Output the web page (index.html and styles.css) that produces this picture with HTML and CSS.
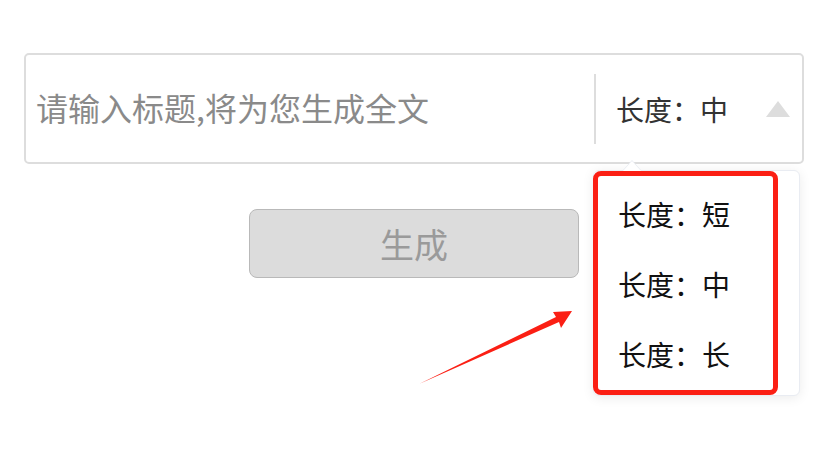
FILE: index.html
```html
<!DOCTYPE html>
<html>
<head>
  <title>生成全文</title>
  <link rel="stylesheet" href="styles.css">
</head>
<body>
  <div class="page">
    <div class="input-box">
      <div class="title-input">请输入标题,将为您生成全文</div>
      <div class="divider"></div>
      <div class="length-select">
        <span class="length-value">长度：中</span>
        <span class="select-arrow"></span>
      </div>
    </div>

    <button class="generate-btn">生成</button>

    <div class="dropdown">
      <div class="dropdown-item">长度：短</div>
      <div class="dropdown-item">长度：中</div>
      <div class="dropdown-item">长度：长</div>
    </div>

    <!-- annotation marks -->
    <div class="mark-box"></div>
    <svg class="mark-arrow" width="828" height="451" viewBox="0 0 828 451">
      <polygon points="419,384 556,317 553,312 572,311 561,328 559,322" fill="#fb1f14"/>
    </svg>
  </div>
</body>
</html>
```

FILE: styles.css
```css
:root {
  --border: #dddddd;
  --placeholder: #8a8a8a;
  --text: #333333;
  --mark-red: #fb1f14;
}

body {
  margin: 0;
  background: #fff;
  font-family: "Noto Sans CJK SC", "Microsoft YaHei", sans-serif;
}

.page {
  position: relative;
  width: 828px;
  height: 451px;
  padding: 53px 24px 0;
  box-sizing: border-box;
}

.input-box {
  display: flex;
  align-items: center;
  height: 111px;
  border: 2px solid var(--border);
  border-radius: 5px;
  box-sizing: border-box;
}

.title-input {
  flex: 1;
  padding: 0 0 3px 10px;
  font-size: 32px;
  color: var(--placeholder);
  white-space: nowrap;
}

.divider {
  width: 2px;
  height: 70px;
  background: var(--border);
}

.length-select {
  display: flex;
  align-items: center;
  justify-content: space-between;
  width: 206px;
  padding: 0 12px 0 20px;
  box-sizing: border-box;
  font-size: 28px;
  color: var(--text);
}

.select-arrow {
  width: 0;
  height: 0;
  border-left: 12px solid transparent;
  border-right: 12px solid transparent;
  border-bottom: 16px solid var(--border);
}

.generate-btn {
  display: block;
  width: 330px;
  height: 69px;
  margin: 45px auto 0;
  background: #dcdcdc;
  border: 1px solid #b9b9b9;
  border-radius: 8px;
  font-family: inherit;
  font-size: 34px;
  color: #9a9a9a;
}

.dropdown {
  position: absolute;
  left: 593px;
  top: 170px;
  width: 207px;
  height: 226px;
  padding: 8px 0;
  box-sizing: border-box;
  background: #fff;
  border: 1px solid #e9ecf2;
  border-radius: 6px;
  box-shadow: 0 2px 12px rgba(0, 0, 0, 0.08);
}

.dropdown::before,
.dropdown::after {
  content: "";
  position: absolute;
  left: 29px;
  width: 0;
  height: 0;
  border-left: 9px solid transparent;
  border-right: 9px solid transparent;
}

.dropdown::before {
  top: -11px;
  border-bottom: 10px solid #e9ecf2;
}

.dropdown::after {
  top: -10px;
  border-bottom: 10px solid #fff;
}

.dropdown-item {
  height: 70px;
  line-height: 70px;
  padding-left: 24px;
  font-size: 28px;
  color: #111;
}

.mark-box {
  position: absolute;
  left: 593px;
  top: 171px;
  width: 185px;
  height: 224px;
  border: 5px solid var(--mark-red);
  border-radius: 8px;
  box-sizing: border-box;
}

.mark-arrow {
  position: absolute;
  left: 0;
  top: 0;
}
```
